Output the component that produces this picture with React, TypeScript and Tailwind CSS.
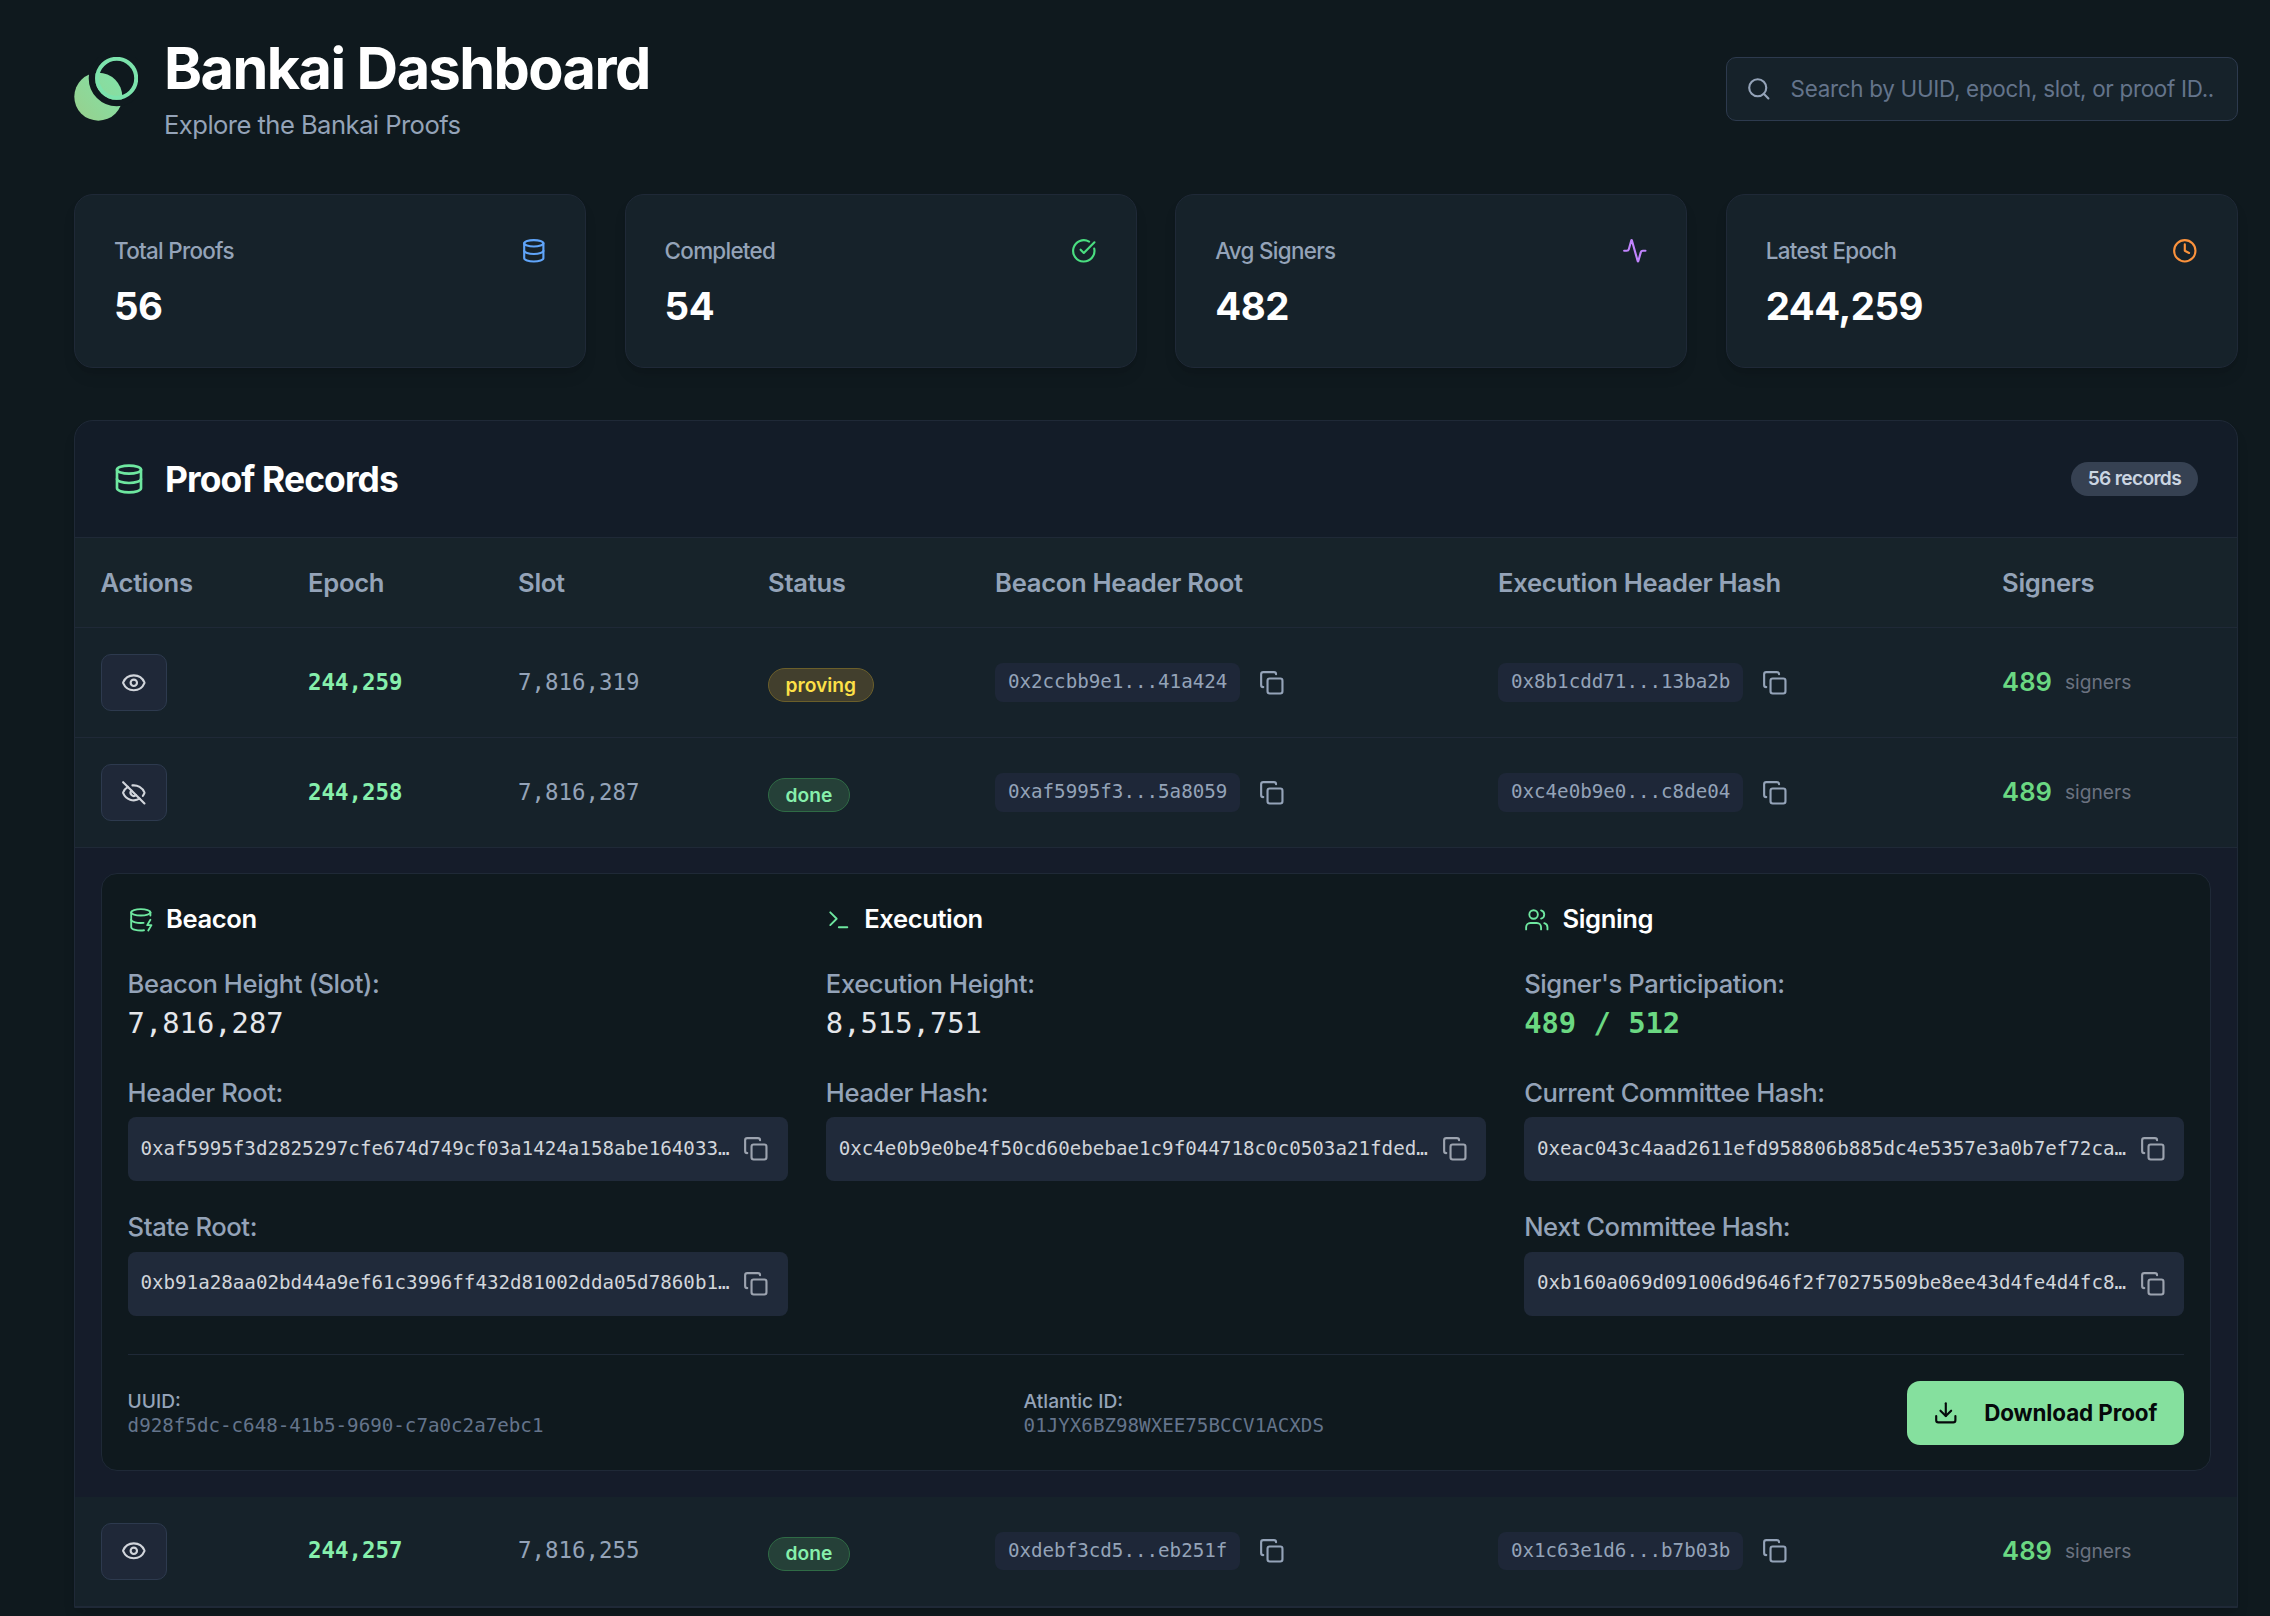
import { Fragment } from 'react';
import type { ReactNode } from 'react';
import { Activity, CircleCheckBig, Clock, Copy, Database, DatabaseZap, Download, Eye, EyeOff, Search, Terminal, Users } from 'lucide-react';

const mono = "font-['DejaVu_Sans_Mono',monospace]";

type Row = { epoch: string; slot: string; status: 'proving' | 'done'; root: string; hash: string; open?: boolean };

const rows: Row[] = [
    { epoch: '244,259', slot: '7,816,319', status: 'proving', root: '0x2ccbb9e1...41a424', hash: '0x8b1cdd71...13ba2b' },
    { epoch: '244,258', slot: '7,816,287', status: 'done', root: '0xaf5995f3...5a8059', hash: '0xc4e0b9e0...c8de04', open: true },
    { epoch: '244,257', slot: '7,816,255', status: 'done', root: '0xdebf3cd5...eb251f', hash: '0x1c63e1d6...b7b03b' },
];

const stats = [
    { label: 'Total Proofs', value: '56', icon: <Database className="h-[25.6px] w-[25.6px] text-[#60a5fa]" /> },
    { label: 'Completed', value: '54', icon: <CircleCheckBig className="h-[25.6px] w-[25.6px] text-[#4ade80]" /> },
    { label: 'Avg Signers', value: '482', icon: <Activity className="h-[25.6px] w-[25.6px] text-[#c084fc]" /> },
    { label: 'Latest Epoch', value: '244,259', icon: <Clock className="h-[25.6px] w-[25.6px] text-[#fb923c]" /> },
];

const Logo = () => (
    <svg viewBox="0 0 64 64" className="h-16 w-16 shrink-0">
        <defs>
            <linearGradient id="logoGrad" gradientUnits="userSpaceOnUse" x1="0" y1="64" x2="64" y2="10">
                <stop offset="0" stopColor="#98cf8c" />
                <stop offset="1" stopColor="#7ce8b0" />
            </linearGradient>
        </defs>
        <circle cx="24.3" cy="39.7" r="24" fill="url(#logoGrad)" />
        <circle cx="42.7" cy="21.3" r="24.75" fill="none" stroke="#0f191e" strokeWidth="6.5" />
        <circle cx="42.7" cy="21.3" r="19.5" fill="none" stroke="#7ce3ac" strokeWidth="4" />
    </svg>
);

const HashBox = ({ value }: { value: string }) => (
    <div className="flex h-16 items-center gap-[13px] rounded-[8px] bg-[#202a3a] pl-[12.8px] pr-[19px]">
        <span className={`${mono} min-w-0 flex-1 truncate text-[19.2px] text-[#d1d5db]`}>{value}</span>
        <Copy className="h-[25.6px] w-[25.6px] shrink-0 text-[#9ca3af]" />
    </div>
);

const Field = ({ label, value }: { label: string; value: string }) => (
    <div className="mt-[27px]">
        <div className="mb-[5.5px] text-[25.6px] leading-[38px] font-medium tracking-[-0.4px] text-[#94a3b8]">{label}</div>
        <HashBox value={value} />
    </div>
);

const Height = ({ label, value, green }: { label: string; value: string; green?: boolean }) => (
    <div className="mt-[26px] pb-[4px]">
        <div className="text-[25.6px] leading-[38px] font-medium tracking-[-0.4px] text-[#94a3b8]">{label}</div>
        <div className={`${mono} text-[28.8px] leading-[40px] ${green ? 'font-bold text-[#6bd882]' : 'text-[#e5e7eb]'}`}>{value}</div>
    </div>
);

const Heading = ({ icon, title }: { icon: ReactNode; title: string }) => (
    <div className="flex h-[38px] items-center gap-[12.8px] text-[25.6px] font-semibold tracking-[-0.4px] text-white">
        {icon}
        {title}
    </div>
);

const Details = () => (
    <div className="bg-[#151c2a] px-[25.6px] pt-[24.5px] pb-[26px]">
        <div className="rounded-[16px] border border-[#1f2937] bg-[#0f191e] px-[26px] pt-[27px] pb-[25px]">
            <div className="grid grid-cols-3 gap-x-[38px]">
                <div>
                    <Heading icon={<DatabaseZap className="h-[25.6px] w-[25.6px] text-[#6ee7a0]" strokeWidth={1.75} />} title="Beacon" />
                    <Height label="Beacon Height (Slot):" value="7,816,287" />
                    <Field label="Header Root:" value="0xaf5995f3d2825297cfe674d749cf03a1424a158abe164033e7c91b04d25a8059" />
                    <Field label="State Root:" value="0xb91a28aa02bd44a9ef61c3996ff432d81002dda05d7860b1f3c4a9e07d21b6ce" />
                </div>
                <div>
                    <Heading icon={<Terminal className="h-[25.6px] w-[25.6px] text-[#6ee7a0]" strokeWidth={1.75} />} title="Execution" />
                    <Height label="Execution Height:" value="8,515,751" />
                    <Field label="Header Hash:" value="0xc4e0b9e0be4f50cd60ebebae1c9f044718c0c0503a21fded7a93e1b064c8de04" />
                </div>
                <div>
                    <Heading icon={<Users className="h-[25.6px] w-[25.6px] text-[#6ee7a0]" strokeWidth={1.75} />} title="Signing" />
                    <Height label="Signer's Participation:" value="489 / 512" green />
                    <Field label="Current Committee Hash:" value="0xeac043c4aad2611efd958806b885dc4e5357e3a0b7ef72ca90b1d4e7f2c6a318" />
                    <Field label="Next Committee Hash:" value="0xb160a069d091006d9646f2f70275509be8ee43d4fe4d4fc85a02e7c1d9b3f640" />
                </div>
            </div>
            <div className="mt-[38px] flex items-center border-t border-[#1f2937] pt-[26px]">
                <div className="w-[896px] shrink-0">
                    <div className="text-[19.2px] leading-[26px] font-medium text-[#94a3b8]">UUID:</div>
                    <div className={`${mono} text-[19.2px] leading-[24px] text-[#64748b]`}>d928f5dc-c648-41b5-9690-c7a0c2a7ebc1</div>
                </div>
                <div>
                    <div className="text-[19.2px] leading-[26px] font-medium text-[#94a3b8]">Atlantic ID:</div>
                    <div className={`${mono} text-[19.2px] leading-[24px] text-[#64748b]`}>01JYX6BZ98WXEE75BCCV1ACXDS</div>
                </div>
                <button className="ml-auto flex h-16 w-[277px] items-center gap-[25.6px] rounded-[13px] bg-[#85e09e] pl-[25.6px] text-[22.4px] font-bold tracking-[-0.1px] text-[#06090b]">
                    <Download className="h-[25.6px] w-[25.6px]" />
                    Download Proof
                </button>
            </div>
        </div>
    </div>
);

const Badge = ({ status }: { status: Row['status'] }) => (
    <span
        className={`mt-[5px] inline-flex h-[34px] items-center rounded-full border px-[16.5px] text-[19.2px] font-semibold ${
            status === 'proving' ? 'border-[#6b5f2a] bg-[#423f2d] text-[#fde047]' : 'border-[#2f6b45] bg-[#254038] text-[#86efac]'
        }`}
    >
        {status}
    </span>
);

const HashCell = ({ value }: { value: string }) => (
    <div className="flex items-center gap-[19px]">
        <code className={`${mono} flex h-[38.4px] items-center rounded-[8px] bg-[#1e2738] px-[12.8px] text-[19.2px] text-[#94a3b8]`}>{value}</code>
        <Copy className="h-[25.6px] w-[25.6px] text-[#94a3b8]" />
    </div>
);

export default function App() {
    const th = 'px-[25.6px] pt-[2px] text-left text-[25.6px] font-semibold tracking-[-0.3px] text-[#94a3b8]';

    return (
        <div className="h-[1616px] overflow-hidden bg-[#0f191e] pt-[36px] pr-[32px] pl-[74px] font-['Inter',sans-serif]">
            {/* Header */}
            <div className="flex h-[105px] items-center justify-between">
                <div className="flex items-center gap-[26px]">
                    <Logo />
                    <div>
                        <h1 className="text-[57.6px] leading-[64px] font-bold tracking-[-0.027em] text-white">Bankai Dashboard</h1>
                        <p className="mt-[9px] text-[25.6px] leading-[32px] tracking-[-0.55px] text-[#94a3b8]">Explore the Bankai Proofs</p>
                    </div>
                </div>
                <div className="flex h-16 w-[512px] items-center gap-[19.5px] rounded-[10px] border border-[#2d3a4e] bg-[#16222a] pr-[24px] pl-[18.5px]">
                    <Search className="h-[25.6px] w-[25.6px] shrink-0 text-[#94a3b8]" />
                    <input
                        placeholder="Search by UUID, epoch, slot, or proof ID..."
                        className="min-w-0 flex-1 bg-transparent text-[22.4px] tracking-[-0.28px] outline-none placeholder:text-[#64748b]"
                    />
                </div>
            </div>

            {/* Stat cards */}
            <div className="mt-[53px] grid grid-cols-4 gap-[38.4px]">
                {stats.map((s) => (
                    <div key={s.label} className="h-[174px] rounded-[19px] border border-[#1f2937] bg-[#16222a] px-[39px] pt-[37.5px] shadow-lg">
                        <div className="flex h-[36px] items-center justify-between">
                            <span className="text-[22.4px] font-medium tracking-[-0.7px] text-[#94a3b8]">{s.label}</span>
                            {s.icon}
                        </div>
                        <div className="mt-[13px] text-[38.4px] leading-[48px] font-bold tracking-[-0.5px] text-white">{s.value}</div>
                    </div>
                ))}
            </div>

            {/* Proof records */}
            <div className="mt-[52px] overflow-hidden rounded-t-[19px] border border-[#1f2937] bg-[#131c28] shadow-lg">
                <div className="flex h-[116.5px] items-center justify-between border-b border-[#1f2937] pr-[39px] pl-[38px]">
                    <div className="flex items-center gap-[20px]">
                        <Database className="h-8 w-8 text-[#6ee7a0]" />
                        <h2 className="pt-[1px] text-[35.4px] font-bold tracking-[-0.025em] text-white">Proof Records</h2>
                    </div>
                    <span className="flex h-[34px] items-center rounded-full bg-[#364152] px-[17px] text-[19.2px] font-semibold tracking-[-0.7px] text-[#cbd5e1]">56 records</span>
                </div>
                <table className="w-full table-fixed">
                    <colgroup>
                        <col className="w-[207.5px]" />
                        <col className="w-[210px]" />
                        <col className="w-[250px]" />
                        <col className="w-[227px]" />
                        <col className="w-[503px]" />
                        <col className="w-[504px]" />
                        <col />
                    </colgroup>
                    <thead>
                        <tr className="h-[90px] border-b border-[#1f2937] bg-[#17232a]">
                            <th className={th}>Actions</th>
                            <th className={th}>Epoch</th>
                            <th className={th}>Slot</th>
                            <th className={th}>Status</th>
                            <th className={th}>Beacon Header Root</th>
                            <th className={th}>Execution Header Hash</th>
                            <th className={th}>Signers</th>
                        </tr>
                    </thead>
                    <tbody>
                        {rows.map((row) => (
                            <Fragment key={row.epoch}>
                                <tr className="h-[110px] border-b border-[#1f2937] bg-[#16222a]">
                                    <td className="px-[25.6px]">
                                        <button className="flex h-[57px] w-[66px] items-center justify-center rounded-[10px] border border-[#2d3a4e] bg-[#1f2838] text-[#d1d5db]">
                                            {row.open ? <EyeOff className="h-[25.6px] w-[25.6px]" /> : <Eye className="h-[25.6px] w-[25.6px]" />}
                                        </button>
                                    </td>
                                    <td className={`${mono} px-[25.6px] text-[22.4px] font-bold text-[#86efac]`}>{row.epoch}</td>
                                    <td className={`${mono} px-[25.6px] text-[22.4px] text-[#94a3b8]`}>{row.slot}</td>
                                    <td className="px-[25.6px]"><Badge status={row.status} /></td>
                                    <td className="px-[25.6px]"><HashCell value={row.root} /></td>
                                    <td className="px-[25.6px]"><HashCell value={row.hash} /></td>
                                    <td className="px-[25.6px]">
                                        <div className="flex items-center gap-[13px]">
                                            <span className="text-[25.6px] font-semibold text-[#6bd882]">489</span>
                                            <span className="text-[19.2px] text-[#6b7280]">signers</span>
                                        </div>
                                    </td>
                                </tr>
                                {row.open && (
                                    <tr>
                                        <td colSpan={7} className="p-0"><Details /></td>
                                    </tr>
                                )}
                            </Fragment>
                        ))}
                    </tbody>
                </table>
            </div>
        </div>
    );
}
